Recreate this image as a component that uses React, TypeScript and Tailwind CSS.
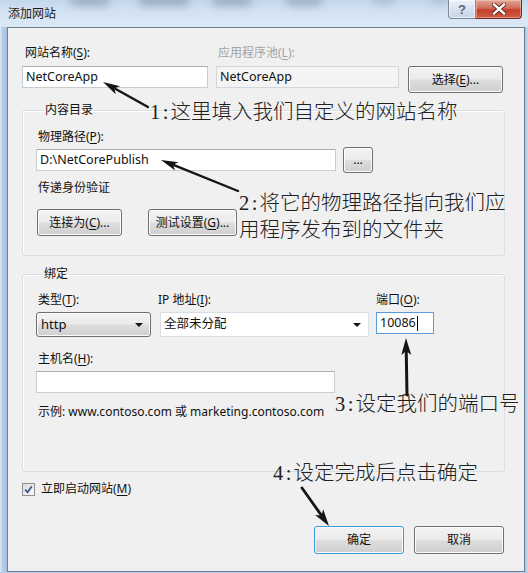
import React from "react";

function Arrow({ x1, y1, x2, y2, len = 17, w = 4.5, sw = 2.4 }: { x1: number; y1: number; x2: number; y2: number; len?: number; w?: number; sw?: number }) {
  const dx = x2 - x1;
  const dy = y2 - y1;
  const L = Math.hypot(dx, dy);
  const ux = dx / L;
  const uy = dy / L;
  const bx = x2 - ux * len;
  const by = y2 - uy * len;
  const px = -uy;
  const py = ux;
  return (
    <g>
      <line x1={x1} y1={y1} x2={bx + ux * 3} y2={by + uy * 3} stroke="#151515" strokeWidth={sw} strokeLinecap="round" />
      <polygon
        points={`${x2},${y2} ${bx + px * w},${by + py * w} ${bx + ux * 4},${by + uy * 4} ${bx - px * w},${by - py * w}`}
        fill="#151515"
      />
    </g>
  );
}

const btn =
  "flex items-center justify-center rounded-[3px] border border-[#707070] bg-[linear-gradient(#f3f3f3_0%,#ebebeb_48%,#dddddd_52%,#cfcfcf_100%)] shadow-[inset_0_0_0_1px_#fbfbfb] text-[12px] text-[#111]";
const input = "h-[22px] border border-[#c9cdd5] border-t-[#abadb3] bg-white flex items-center pl-[3px] text-[12.5px] text-[#111]";

function U({ c }: { c: string }) {
  return <u className="underline underline-offset-[2px] decoration-[1px]">{c}</u>;
}

function Note({ n, text }: { n: string; text: string }) {
  return (
    <span className="whitespace-nowrap">
      <span className="inline-block w-[10.5px] font-['Liberation_Serif',serif]">{n}</span>
      <span className="inline-block w-[10px] text-center font-['Liberation_Serif',serif]">:</span>
      <span>{text}</span>
    </span>
  );
}

export default function App() {
  return (
    <div className="relative w-[528px] h-[573px] overflow-hidden bg-[#b7cfea] font-['Noto_Sans','Noto_Sans_CJK_SC',sans-serif] text-[#111]">
      <div className="flex flex-col h-full">
        {/* title bar */}
        <div className="relative h-[27px] shrink-0 bg-[linear-gradient(#c3d7ec,#d3e3f3_45%,#dbe8f6)] flex items-center pl-[8px]">
          <div className="absolute left-[70px] top-[-6px] w-[40px] h-[12px] rounded-full bg-[#8195aa] opacity-60 blur-[4px]" />
          <div className="absolute left-[138px] top-[-6px] w-[52px] h-[12px] rounded-full bg-[#7e92a8] opacity-60 blur-[4px]" />
          <div className="absolute left-[212px] top-[-6px] w-[40px] h-[12px] rounded-full bg-[#7e92a8] opacity-60 blur-[4px]" />
          <div className="absolute left-[286px] top-[-6px] w-[36px] h-[12px] rounded-full bg-[#8497ab] opacity-60 blur-[4px]" />
          <div className="absolute left-[372px] top-[-6px] w-[22px] h-[10px] rounded-full bg-[#90a2b5] opacity-50 blur-[4px]" />
          <div className="absolute left-[430px] top-[-6px] w-[20px] h-[10px] rounded-full bg-[#90a2b5] opacity-40 blur-[4px]" />
          <span className="relative text-[12px] leading-[16px] text-[#1a1a1a] mt-[1px]">添加网站</span>
          <div className="absolute left-[448px] top-0 w-[28px] h-[19px] rounded-bl-[4px] border border-t-0 border-[#7a8799] bg-[linear-gradient(#edf2f8,#d8e2ee_50%,#c7d4e3)] flex items-center justify-center shadow-[inset_0_0_0_1px_rgba(255,255,255,0.6)]">
            <span className="text-[13px] leading-none font-bold text-[#5a6778] font-['Liberation_Sans',sans-serif]">?</span>
          </div>
          <div className="absolute left-[476px] top-0 w-[46px] h-[19px] rounded-br-[4px] border border-t-0 border-l-0 border-[#6a2a22] bg-[linear-gradient(#e3a596,#d06e5b_45%,#c2402c_55%,#cf5b3f)] flex items-center justify-center shadow-[inset_0_0_0_1px_rgba(255,220,210,0.45)]">
            <svg width="14" height="12" viewBox="0 0 14 12">
              <path d="M2 1.5 L12 10.5 M12 1.5 L2 10.5" stroke="#5a1a14" strokeWidth="4.2" strokeLinecap="square" />
              <path d="M2 1.5 L12 10.5 M12 1.5 L2 10.5" stroke="#ffffff" strokeWidth="2.4" strokeLinecap="square" />
            </svg>
          </div>
        </div>

        {/* body */}
        <div className="flex flex-1 min-h-0">
          <div className="w-[7px] shrink-0 bg-[linear-gradient(90deg,#dfe9f5,#b4cce8_35%,#a7c2e3)]" />
          <div className="w-[518px] shrink-0 border border-[#6e7d8f] bg-[#f0f0f0] flex flex-col pl-[14px] pt-[17px]">
            {/* top row labels */}
            <div className="flex h-[16px] text-[12px] leading-[16px]">
              <div className="w-[194px] pl-[3px]">
                网站名称(<U c="S" />):
              </div>
              <div className="pl-[2px] text-[#a3a3a3]">
                应用程序池(<U c="L" />):
              </div>
            </div>
            <div className="flex items-start mt-[5px]">
              <div className={`${input} w-[186px]`}>NetCoreApp</div>
              <div className="ml-[8px] w-[183px] h-[22px] border border-[#d3d6db] bg-[#f4f4f4] flex items-center pl-[3px] text-[12.5px] text-[#111]">
                NetCoreApp
              </div>
              <div className={`${btn} ml-[9px] w-[95px] h-[27px]`}>
                选择(<U c="E" />)...
              </div>
            </div>

            {/* content dir */}
            <fieldset className="mt-[9px] w-[483px] border border-[#d5dfe5] rounded-[3px] pl-[13px] pt-[11px] pb-[19px] shadow-[inset_1px_1px_0_#ffffff]">
              <legend className="ml-[8px] px-[1px] text-[12px] leading-[16px]">内容目录</legend>
              <div className="ml-[2px] text-[12px] leading-[16px] h-[16px]">
                物理路径(<U c="P" />):
              </div>
              <div className="mt-[2px] flex items-center h-[26px]">
                <div className={`${input} w-[300px]`}>D:\NetCorePublish</div>
                <div className={`${btn} ml-[7px] w-[30px] h-[26px]`}>...</div>
              </div>
              <div className="mt-[7px] ml-[2px] text-[12px] leading-[16px] h-[16px]">传递身份验证</div>
              <div className="mt-[13px] flex">
                <div className={`${btn} ml-[1px] w-[85px] h-[27px]`}>
                  连接为(<U c="C" />)...
                </div>
                <div className={`${btn} ml-[26px] w-[89px] h-[27px]`}>
                  测试设置(<U c="G" />)...
                </div>
              </div>
            </fieldset>

            {/* binding */}
            <fieldset className="mt-[10px] w-[483px] border border-[#d5dfe5] rounded-[3px] pl-[13px] pt-[10px] pb-[51px] shadow-[inset_1px_1px_0_#ffffff]">
              <legend className="ml-[7px] px-[1px] text-[12px] leading-[16px]">绑定</legend>
              <div className="flex h-[16px] text-[12px] leading-[16px]">
                <div className="w-[122px] pl-[2px]">
                  类型(<U c="T" />):
                </div>
                <div className="w-[218px]">
                  IP 地址(<U c="I" />):
                </div>
                <div>
                  端口(<U c="O" />):
                </div>
              </div>
              <div className="mt-[4px] flex items-start">
                <div className={`${btn} !justify-between w-[115px] h-[25px] pl-[4px] pr-[7px] !text-[13px]`}>
                  <span>http</span>
                  <svg width="8" height="4" viewBox="0 0 8 4">
                    <path d="M0 0 H8 L4 4 Z" fill="#111" />
                  </svg>
                </div>
                <div className="ml-[9px] w-[209px] h-[25px] border border-[#dadde2] bg-white flex items-center justify-between pl-[3px] pr-[7px] text-[12.5px]">
                  <span>全部未分配</span>
                  <svg width="8" height="4" viewBox="0 0 8 4">
                    <path d="M0 0 H8 L4 4 Z" fill="#111" />
                  </svg>
                </div>
                <div className="ml-[7px] w-[58px] h-[22px] border border-[#569de5] bg-white flex items-center pl-[3px] text-[12.5px]">
                  <span>10086</span>
                  <span className="w-[1px] h-[15px] bg-black ml-[1px]" />
                </div>
              </div>
              <div className="mt-[14px] ml-[2px] text-[12px] leading-[16px] h-[16px]">
                主机名(<U c="H" />):
              </div>
              <div className={`${input} mt-[4px] w-[299px]`} />
              <div className="mt-[11px] ml-[2px] text-[12px] leading-[16px] h-[16px]">
                示例: www.contoso.com 或 marketing.contoso.com
              </div>
            </fieldset>

            {/* checkbox */}
            <div className="mt-[9px] flex items-center h-[16px]">
              <div className="w-[13px] h-[13px] border border-[#8e8f8f] bg-[linear-gradient(135deg,#dcdcdc,#fbfbfb)] flex items-center justify-center">
                <svg width="9" height="9" viewBox="0 0 9 9">
                  <path d="M1.2 4.6 L3.6 7.2 L7.8 1.2" stroke="#3d5a92" strokeWidth="1.8" fill="none" />
                </svg>
              </div>
              <span className="ml-[6px] text-[12px] leading-[16px]">
                立即启动网站(<U c="M" />)
              </span>
            </div>

            {/* buttons */}
            <div className="mt-[29px] flex justify-end pr-[20px]">
              <div className={`${btn} w-[90px] h-[28px] !border-[#3c9ad8] shadow-[inset_0_0_0_1px_#7fdcf8]`}>确定</div>
              <div className={`${btn} ml-[10px] w-[90px] h-[28px]`}>取消</div>
            </div>
          </div>
          <div className="flex-1 bg-[linear-gradient(90deg,#a7c2e3,#c9dbef)]" />
        </div>
        <div className="h-[1px] shrink-0 bg-[#b7cfea]" />
      </div>

      {/* annotations */}
      <svg className="absolute left-0 top-0 pointer-events-none" width="528" height="573">
        <Arrow x1={148} y1={107} x2={103} y2={82} />
        <Arrow x1={238} y1={191} x2={161} y2={160} />
        <Arrow x1={407} y1={395} x2={406} y2={338} sw={3} w={5} />
        <Arrow x1={302} y1={488} x2={329} y2={526} sw={2.8} w={5} />
      </svg>
      <div className="absolute left-[150px] top-[100px] text-[20.5px] leading-[21px] text-[#202020] font-['Noto_Sans_CJK_SC',sans-serif] font-light">
        <Note n="1" text="这里填入我们自定义的网站名称" />
      </div>
      <div className="absolute left-[239px] top-[189px] text-[20.5px] leading-[25px] text-[#202020] font-['Noto_Sans_CJK_SC',sans-serif] font-light">
        <div>
          <Note n="2" text="将它的物理路径指向我们应" />
        </div>
        <div>用程序发布到的文件夹</div>
      </div>
      <div className="absolute left-[335px] top-[392px] text-[20.5px] leading-[21px] text-[#202020] font-['Noto_Sans_CJK_SC',sans-serif] font-light">
        <Note n="3" text="设定我们的端口号" />
      </div>
      <div className="absolute left-[273px] top-[461px] text-[20.5px] leading-[21px] text-[#202020] font-['Noto_Sans_CJK_SC',sans-serif] font-light">
        <Note n="4" text="设定完成后点击确定" />
      </div>
    </div>
  );
}
